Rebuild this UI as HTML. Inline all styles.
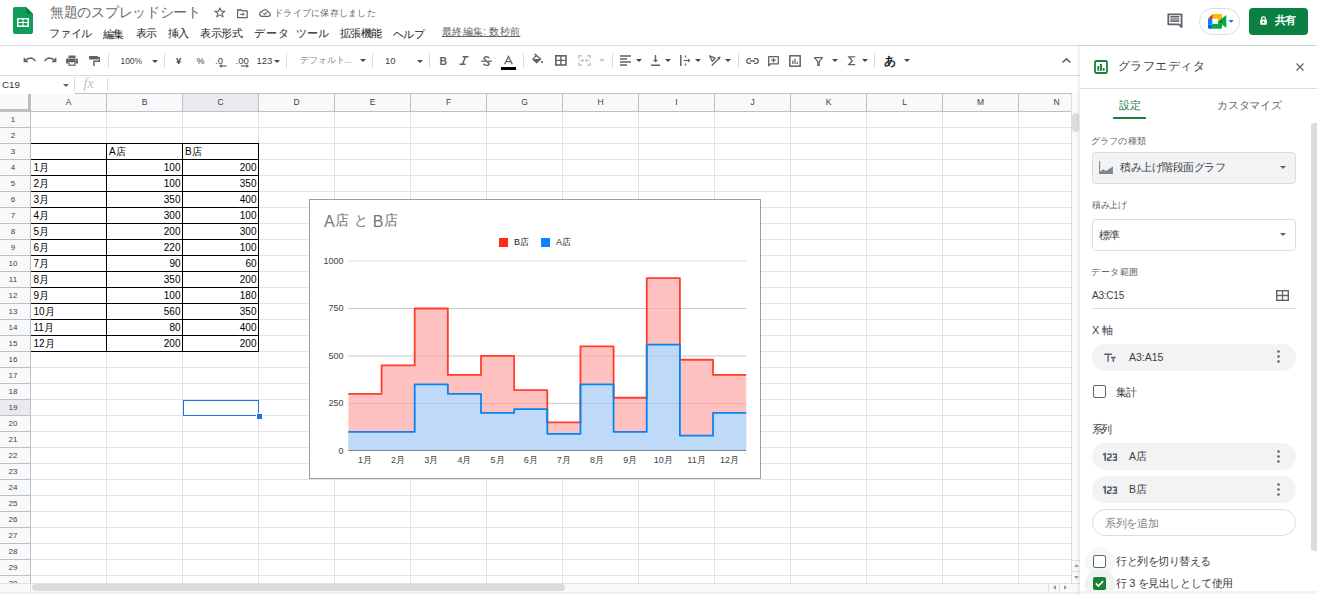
<!DOCTYPE html><html><head><meta charset="utf-8"><style>
*{margin:0;padding:0;box-sizing:border-box}
html,body{width:1317px;height:594px;overflow:hidden;background:#fff;font-family:"Liberation Sans", sans-serif;position:relative}
.a{position:absolute;white-space:nowrap}
svg{position:absolute;overflow:visible}
</style></head><body>

<svg style="left:13px;top:7px" width="20" height="27" viewBox="0 0 20 27">
<path d="M2 0H13L20 7V25Q20 27 18 27H2Q0 27 0 25V2Q0 0 2 0Z" fill="#0f9d58"/>
<path d="M13 0L20 7H15Q13 7 13 5Z" fill="#087f3f"/>
<rect x="4" y="11" width="12" height="9" fill="#fff"/>
<rect x="5.5" y="12.5" width="4" height="2.5" fill="#0f9d58" rx="0.8"/><rect x="10.5" y="12.5" width="4" height="2.5" fill="#0f9d58" rx="0.8"/>
<rect x="5.5" y="16" width="4" height="2.5" fill="#0f9d58" rx="0.8"/><rect x="10.5" y="16" width="4" height="2.5" fill="#0f9d58" rx="0.8"/>
</svg>
<div class="a" style="left:50px;top:6px;font-size:13.5px;line-height:13.5px;color:#6a6a6a;letter-spacing:-0.3px;">無題のスプレッドシート</div>
<svg style="left:214px;top:7px" width="12" height="11" viewBox="0 0 12 11"><path d="M5.9 0.9L7.3 4.2H10.9L8 6.4L9 9.9L5.9 7.9L2.8 9.9L3.8 6.4L0.9 4.2H4.5Z" fill="none" stroke="#5f6368" stroke-width="1.1" stroke-linejoin="round"/></svg>
<svg style="left:237px;top:8.5px" width="11" height="10" viewBox="0 0 11 10"><path d="M0.6 0.8H4.2L5.2 1.8H10.2V8.7H0.6Z" fill="none" stroke="#5f6368" stroke-width="1.2" stroke-linejoin="round"/><path d="M0.6 0.6H4.3L5.3 1.6H0.6Z" fill="#5f6368"/><path d="M3.2 5.3H6.6" stroke="#5f6368" stroke-width="1.1"/><path d="M7.8 5.3L5.6 3.5V7.1Z" fill="#5f6368"/></svg>
<svg style="left:259px;top:9px" width="12" height="8" viewBox="0 0 12 8"><path d="M3 7.3H9.2Q11.3 7.3 11.3 5.3Q11.3 3.5 9.4 3.4Q8.8 0.7 6 0.7Q3.9 0.7 3 2.6Q0.7 3 0.7 5Q0.7 7.3 3 7.3Z" fill="none" stroke="#5f6368" stroke-width="1.15"/><path d="M4.3 4.3L5.6 5.5L7.8 3.3" fill="none" stroke="#5f6368" stroke-width="1.1"/></svg>
<div class="a" style="left:274px;top:9px;font-size:9px;line-height:9px;color:#5f6368;letter-spacing:0.26px;">ドライブに保存しました</div>
<div class="a" style="left:49px;top:28px;font-size:11px;line-height:11px;color:#202124;letter-spacing:-0.23px;">ファイル</div>
<div class="a" style="left:103px;top:29px;font-size:11px;line-height:11px;color:#202124;letter-spacing:-0.8px;">編集</div>
<div class="a" style="left:136px;top:28px;font-size:11px;line-height:11px;color:#202124;letter-spacing:-1.4px;">表示</div>
<div class="a" style="left:168px;top:28px;font-size:11px;line-height:11px;color:#202124;letter-spacing:-0.9px;">挿入</div>
<div class="a" style="left:200px;top:28px;font-size:11px;line-height:11px;color:#202124;letter-spacing:-0.47px;">表示形式</div>
<div class="a" style="left:254px;top:28px;font-size:11px;line-height:11px;color:#202124;letter-spacing:1.0px;">データ</div>
<div class="a" style="left:296px;top:28px;font-size:11px;line-height:11px;color:#202124;letter-spacing:0.05px;">ツール</div>
<div class="a" style="left:340px;top:28px;font-size:11px;line-height:11px;color:#202124;letter-spacing:-0.7px;">拡張機能</div>
<div class="a" style="left:393px;top:29px;font-size:11px;line-height:11px;color:#202124;letter-spacing:-0.6px;">ヘルプ</div>
<div class="a" style="left:442px;top:27px;font-size:10px;line-height:10px;color:#5f6368;letter-spacing:0.31px;text-decoration:underline">最終編集: 数秒前</div>
<svg style="left:1167px;top:13px" width="16" height="15" viewBox="0 0 16 15"><path d="M1.3 1.3H14.6V14L11.8 11.3H1.3Z" fill="none" stroke="#5f6368" stroke-width="1.8" stroke-linejoin="round"/><rect x="3.3" y="3" width="9" height="1.3" fill="#5f6368"/><rect x="3.3" y="4.3" width="9" height="3.6" fill="#9aa0a6"/><rect x="3.3" y="7.6" width="9" height="1.3" fill="#5f6368"/></svg>
<div class="a" style="left:1199px;top:8px;width:41px;height:27px;border:1px solid #dadce0;border-radius:14px"></div>
<svg style="left:1204px;top:11px" width="34" height="21" viewBox="0 0 34 21">
<path d="M8.3 3H16.8Q18 3 18 4.2V7.6L14 10.4V7.8H8.3Z" fill="#ffba00"/>
<path d="M4 7.8L8.5 3.2V7.8Z" fill="#ff1a0a"/>
<path d="M4 7.6H8.3V13.6H4Z" fill="#0084ff"/>
<path d="M4 13.4H8.3V17.8H5.2Q4 17.8 4 16.6Z" fill="#0066da"/>
<path d="M8.2 13H14V10.4L18 13.6V16.6Q18 17.8 16.8 17.8H8.2Z" fill="#00ac47"/>
<path d="M14 10.4L18 7.4V13.6Z" fill="#00832d"/>
<path d="M17.8 7.6L22.3 4V17L17.8 13.6Z" fill="#00ac47"/>
<path d="M24.3 9H29.9L27.1 11.8Z" fill="#1a73e8"/>
</svg>
<div class="a" style="left:1249px;top:8px;width:59px;height:27px;background:#0b8043;border-radius:4px"></div>
<svg style="left:1260px;top:16px" width="7" height="9" viewBox="0 0 7 9"><path d="M1.6 3.8V2.6Q1.6 0.8 3.5 0.8Q5.4 0.8 5.4 2.6V3.8" fill="none" stroke="#fff" stroke-width="1.2"/><rect x="0.2" y="3.6" width="6.6" height="5.2" rx="0.8" fill="#fff"/><circle cx="3.5" cy="6.2" r="0.9" fill="#0b8043"/></svg>
<div class="a" style="left:1275px;top:15px;font-size:11px;line-height:11px;color:#fff;letter-spacing:-1.5px;font-weight:bold">共有</div>
<div class="a" style="left:0px;top:45px;width:1317px;height:1px;background:#dadce0;"></div>
<div class="a" style="left:0px;top:75px;width:1080px;height:1px;background:#dadce0;"></div>
<svg style="left:23px;top:56px" width="13" height="8" viewBox="0 0 13 8"><path d="M3.2 3.6Q6 1.6 9 2.3Q11.2 2.9 12.2 5.2" fill="none" stroke="#5f6368" stroke-width="1.6"/><path d="M0.6 1V6.2H5.8Z" fill="#5f6368"/></svg>
<svg style="left:44px;top:56px" width="13" height="8" viewBox="0 0 13 8"><path d="M9.8 3.6Q7 1.6 4 2.3Q1.8 2.9 0.8 5.2" fill="none" stroke="#5f6368" stroke-width="1.6"/><path d="M12.4 1V6.2H7.2Z" fill="#5f6368"/></svg>
<svg style="left:66px;top:55px" width="12" height="11" viewBox="0 0 12 11"><rect x="2.5" y="0.5" width="7" height="2.5" fill="#5f6368"/><path d="M1.3 3.5H10.7Q12 3.5 12 4.8V8.5H9.5V7H2.5V8.5H0V4.8Q0 3.5 1.3 3.5Z" fill="#5f6368"/><rect x="2.5" y="7.5" width="7" height="3.3" fill="#5f6368"/><rect x="3.7" y="7.7" width="4.6" height="1.9" fill="#fff"/><circle cx="9.8" cy="5.2" r="0.6" fill="#fff"/></svg>
<svg style="left:89px;top:56px" width="11" height="10" viewBox="0 0 11 10"><rect x="0" y="0" width="9" height="3.6" rx="0.5" fill="#5f6368"/><path d="M9 1.8H10.3V5.3H5V10" fill="none" stroke="#5f6368" stroke-width="1.5"/></svg>
<div class="a" style="left:108px;top:53px;width:1px;height:15px;background:#dadce0;"></div>
<div class="a" style="left:120.5px;top:56.8px;font-size:8.4px;line-height:8.4px;color:#3c4043;">100%</div>
<svg style="left:152px;top:60px" width="6" height="3" viewBox="0 0 6 3"><path d="M0 0H6L3 3Z" fill="#444746"/></svg>
<div class="a" style="left:164px;top:53px;width:1px;height:15px;background:#dadce0;"></div>
<div class="a" style="left:176px;top:56px;font-size:9.5px;line-height:9.5px;color:#3c4043;font-weight:bold">¥</div>
<div class="a" style="left:196.5px;top:56.5px;font-size:9px;line-height:9px;color:#3c4043;">%</div>
<div class="a" style="left:215px;top:55.5px;font-size:9.5px;line-height:9.5px;color:#3c4043;">.0</div>
<svg style="left:219px;top:64px" width="8" height="4" viewBox="0 0 8 4"><path d="M1 2H7.5" stroke="#5f6368" stroke-width="1.2"/><path d="M0 2L2.6 0V4Z" fill="#5f6368"/></svg>
<div class="a" style="left:235.5px;top:55.5px;font-size:9.5px;line-height:9.5px;color:#3c4043;">.00</div>
<svg style="left:241px;top:64px" width="8" height="4" viewBox="0 0 8 4"><path d="M0 2H6.5" stroke="#5f6368" stroke-width="1.2"/><path d="M8 2L5.4 0V4Z" fill="#5f6368"/></svg>
<div class="a" style="left:256.5px;top:56px;font-size:9.5px;line-height:9.5px;color:#3c4043;">123</div>
<svg style="left:273.5px;top:59.5px" width="6" height="3" viewBox="0 0 6 3"><path d="M0 0H6L3 3Z" fill="#444746"/></svg>
<div class="a" style="left:286px;top:53px;width:1px;height:15px;background:#dadce0;"></div>
<div class="a" style="left:299.5px;top:55.5px;font-size:8.5px;line-height:8.5px;color:#80868b;">デフォルト...</div>
<svg style="left:360px;top:59px" width="6" height="3" viewBox="0 0 6 3"><path d="M0 0H6L3 3Z" fill="#444746"/></svg>
<div class="a" style="left:372px;top:53px;width:1px;height:15px;background:#dadce0;"></div>
<div class="a" style="left:385px;top:56px;font-size:9.5px;line-height:9.5px;color:#3c4043;">10</div>
<svg style="left:416.5px;top:60px" width="6" height="3" viewBox="0 0 6 3"><path d="M0 0H6L3 3Z" fill="#444746"/></svg>
<div class="a" style="left:429px;top:53px;width:1px;height:15px;background:#dadce0;"></div>
<div class="a" style="left:439.5px;top:55.5px;font-size:10.5px;line-height:10.5px;color:#5f6368;font-weight:bold">B</div>
<svg style="left:459px;top:56px" width="10" height="9" viewBox="0 0 10 9"><path d="M3.5 0.8H9.5M0.5 8.2H6.5M6.5 0.8L3.5 8.2" fill="none" stroke="#5f6368" stroke-width="1.5"/></svg>
<svg style="left:481px;top:56px" width="11" height="10" viewBox="0 0 11 10"><path d="M0 5.2H11" stroke="#5f6368" stroke-width="1.2"/><path d="M8.2 2.2Q7.5 0.8 5.5 0.8Q3 0.8 3 2.6Q3 4 5.5 4.5M5.8 6Q8.2 6.6 8.2 7.8Q8.2 9.4 5.5 9.4Q3.2 9.4 2.7 7.8" fill="none" stroke="#5f6368" stroke-width="1.4"/></svg>
<svg style="left:504px;top:55.5px" width="9" height="9" viewBox="0 0 9 9"><path d="M0.7 8.3L4.5 0.5L8.3 8.3M2 5.6H7" fill="none" stroke="#5f6368" stroke-width="1.3"/></svg>
<div class="a" style="left:501px;top:67px;width:15px;height:3px;background:#000;"></div>
<div class="a" style="left:523px;top:53px;width:1px;height:15px;background:#dadce0;"></div>
<svg style="left:531px;top:53px" width="13" height="11" viewBox="0 0 13 11"><path d="M1.8 6.1L5.4 2.5L9.6 6.1L5.6 9.7Z" fill="none" stroke="#5f6368" stroke-width="1.3" stroke-linejoin="round"/><path d="M1.8 6.1H9.6L5.6 9.7Z" fill="#5f6368"/><path d="M3.6 0.8L5.9 3" stroke="#5f6368" stroke-width="1.2"/><circle cx="11" cy="9.1" r="1.05" fill="#5f6368"/></svg>
<svg style="left:555px;top:55px" width="12" height="11" viewBox="0 0 12 11"><rect x="0.8" y="0.8" width="10.2" height="9.2" fill="none" stroke="#5f6368" stroke-width="1.6"/><path d="M5.9 0.8V10M0.8 5.4H11" stroke="#5f6368" stroke-width="1.4"/></svg>
<svg style="left:578px;top:55px" width="13" height="11" viewBox="0 0 13 11"><path d="M0.8 3.5V0.8H4M9 0.8H12.2V3.5M0.8 7.5V10.2H4M9 10.2H12.2V7.5" fill="none" stroke="#c4c7c5" stroke-width="1.4"/><path d="M1.5 5.5H5.5M11.5 5.5H7.5M4 4L5.5 5.5L4 7M9 4L7.5 5.5L9 7" fill="none" stroke="#c4c7c5" stroke-width="1.1"/></svg>
<svg style="left:599px;top:59px" width="6" height="3" viewBox="0 0 6 3"><path d="M0 0H6L3 3Z" fill="#c4c7c5"/></svg>
<div class="a" style="left:612px;top:53px;width:1px;height:15px;background:#dadce0;"></div>
<svg style="left:620px;top:55px" width="11" height="11" viewBox="0 0 11 11"><path d="M0 1H11M0 4H7M0 7H11M0 10H7" stroke="#5f6368" stroke-width="1.3"/></svg>
<svg style="left:636px;top:59px" width="6" height="3" viewBox="0 0 6 3"><path d="M0 0H6L3 3Z" fill="#444746"/></svg>
<svg style="left:651px;top:55px" width="9" height="11" viewBox="0 0 9 11"><path d="M4.5 0V7M0 10.2H9" stroke="#5f6368" stroke-width="1.4"/><path d="M2 4.8L4.5 7.5L7 4.8Z" fill="#5f6368"/></svg>
<svg style="left:665px;top:59px" width="6" height="3" viewBox="0 0 6 3"><path d="M0 0H6L3 3Z" fill="#444746"/></svg>
<svg style="left:680px;top:55px" width="11" height="11" viewBox="0 0 11 11"><path d="M0.8 0V11" stroke="#5f6368" stroke-width="1.5"/><path d="M5.5 0.5V2.5M5.5 8.5V10.5" stroke="#5f6368" stroke-width="1.3"/><path d="M3.5 5.5H9" stroke="#5f6368" stroke-width="1.2"/><path d="M10.5 5.5L8 3.5V7.5Z" fill="#5f6368"/></svg>
<svg style="left:695px;top:59px" width="6" height="3" viewBox="0 0 6 3"><path d="M0 0H6L3 3Z" fill="#444746"/></svg>
<svg style="left:709px;top:55px" width="12" height="11" viewBox="0 0 12 11"><path d="M0.5 0.8L6 3.2L3.2 6.2Z" fill="none" stroke="#5f6368" stroke-width="1.3" stroke-linejoin="round"/><path d="M2.8 10.5L11 2.2" stroke="#5f6368" stroke-width="1.3"/><path d="M11.5 1.5L8.3 2.3L10.7 4.7Z" fill="#5f6368"/></svg>
<svg style="left:725px;top:59px" width="6" height="3" viewBox="0 0 6 3"><path d="M0 0H6L3 3Z" fill="#444746"/></svg>
<div class="a" style="left:738px;top:53px;width:1px;height:15px;background:#dadce0;"></div>
<svg style="left:746px;top:58px" width="13" height="6" viewBox="0 0 13 6"><path d="M5 0.7H3.2Q0.7 0.7 0.7 3Q0.7 5.3 3.2 5.3H5M8 0.7H9.8Q12.3 0.7 12.3 3Q12.3 5.3 9.8 5.3H8M4 3H9" fill="none" stroke="#5f6368" stroke-width="1.3"/></svg>
<svg style="left:768px;top:56px" width="11" height="11" viewBox="0 0 11 11"><path d="M0.7 0.7H10.3V7.8H2.5L0.7 9.8Z" fill="none" stroke="#5f6368" stroke-width="1.3" stroke-linejoin="round"/><path d="M5.5 2V6.5M3.2 4.2H7.8" stroke="#5f6368" stroke-width="1.2"/></svg>
<svg style="left:789px;top:55px" width="12" height="12" viewBox="0 0 12 12"><rect x="0.8" y="0.8" width="10.4" height="10.4" fill="none" stroke="#5f6368" stroke-width="1.5"/><path d="M3.8 5.5V9M6 3.8V9M8.2 6.8V9" stroke="#5f6368" stroke-width="1.2"/></svg>
<svg style="left:813.5px;top:56.5px" width="9" height="8.5" viewBox="0 0 9 8.5"><path d="M0.5 0.7H8.5L5.2 4.6V8.5H3.8V4.6Z" fill="none" stroke="#5f6368" stroke-width="1.2" stroke-linejoin="round"/></svg>
<svg style="left:832px;top:59px" width="6" height="3" viewBox="0 0 6 3"><path d="M0 0H6L3 3Z" fill="#444746"/></svg>
<svg style="left:848px;top:56px" width="7.5" height="9.5" viewBox="0 0 7.5 9.5"><path d="M7.2 0.8H0.8L4.3 4.75L0.8 8.7H7.2" fill="none" stroke="#5f6368" stroke-width="1.3"/></svg>
<svg style="left:862px;top:59px" width="6" height="3" viewBox="0 0 6 3"><path d="M0 0H6L3 3Z" fill="#444746"/></svg>
<div class="a" style="left:874px;top:53px;width:1px;height:15px;background:#dadce0;"></div>
<div class="a" style="left:883.5px;top:54.5px;font-size:12px;line-height:12px;color:#202124;font-weight:bold">あ</div>
<svg style="left:904px;top:59px" width="6" height="3" viewBox="0 0 6 3"><path d="M0 0H6L3 3Z" fill="#444746"/></svg>
<svg style="left:1062px;top:58px" width="9" height="5" viewBox="0 0 9 5"><path d="M0.5 4.5L4.5 0.8L8.5 4.5" fill="none" stroke="#5f6368" stroke-width="1.6"/></svg>
<div class="a" style="left:2px;top:80px;font-size:9.8px;line-height:9.8px;color:#333;">C19</div>
<svg style="left:63px;top:84px" width="6" height="3" viewBox="0 0 6 3"><path d="M0 0H6L3 3Z" fill="#5f6368"/></svg>
<div class="a" style="left:74px;top:77px;width:1px;height:16px;background:#dadce0;"></div>
<div class="a" style="left:83.5px;top:77px;font-size:14px;line-height:14px;color:#bdc1c6;font-family:'Liberation Serif',serif;font-style:italic">fx</div>
<div class="a" style="left:107px;top:78px;width:1px;height:13px;background:#dadce0;"></div>
<div class="a" style="left:0px;top:94px;width:1071px;height:17px;background:#f8f9fa;"></div>
<div class="a" style="left:75px;top:93px;width:999px;height:1px;background:#c0c0c0;"></div>
<div class="a" style="left:183px;top:94px;width:75px;height:17px;background:#e8eaed;"></div>
<div class="a" style="left:0px;top:111px;width:30px;height:472px;background:#f8f9fa;"></div>
<div class="a" style="left:0px;top:400px;width:30px;height:15px;background:#e8eaed;"></div>
<div class="a" style="left:0px;top:111px;width:30px;height:1px;background:#c0c0c0;"></div>
<div class="a" style="left:31px;top:111px;width:1040px;height:1px;background:#c0c0c0;"></div>
<div class="a" style="left:0px;top:127px;width:30px;height:1px;background:#c0c0c0;"></div>
<div class="a" style="left:31px;top:127px;width:1040px;height:1px;background:#e2e3e3;"></div>
<div class="a" style="left:0px;top:143px;width:30px;height:1px;background:#c0c0c0;"></div>
<div class="a" style="left:31px;top:143px;width:1040px;height:1px;background:#e2e3e3;"></div>
<div class="a" style="left:0px;top:159px;width:30px;height:1px;background:#c0c0c0;"></div>
<div class="a" style="left:31px;top:159px;width:1040px;height:1px;background:#e2e3e3;"></div>
<div class="a" style="left:0px;top:175px;width:30px;height:1px;background:#c0c0c0;"></div>
<div class="a" style="left:31px;top:175px;width:1040px;height:1px;background:#e2e3e3;"></div>
<div class="a" style="left:0px;top:191px;width:30px;height:1px;background:#c0c0c0;"></div>
<div class="a" style="left:31px;top:191px;width:1040px;height:1px;background:#e2e3e3;"></div>
<div class="a" style="left:0px;top:207px;width:30px;height:1px;background:#c0c0c0;"></div>
<div class="a" style="left:31px;top:207px;width:1040px;height:1px;background:#e2e3e3;"></div>
<div class="a" style="left:0px;top:223px;width:30px;height:1px;background:#c0c0c0;"></div>
<div class="a" style="left:31px;top:223px;width:1040px;height:1px;background:#e2e3e3;"></div>
<div class="a" style="left:0px;top:239px;width:30px;height:1px;background:#c0c0c0;"></div>
<div class="a" style="left:31px;top:239px;width:1040px;height:1px;background:#e2e3e3;"></div>
<div class="a" style="left:0px;top:255px;width:30px;height:1px;background:#c0c0c0;"></div>
<div class="a" style="left:31px;top:255px;width:1040px;height:1px;background:#e2e3e3;"></div>
<div class="a" style="left:0px;top:271px;width:30px;height:1px;background:#c0c0c0;"></div>
<div class="a" style="left:31px;top:271px;width:1040px;height:1px;background:#e2e3e3;"></div>
<div class="a" style="left:0px;top:287px;width:30px;height:1px;background:#c0c0c0;"></div>
<div class="a" style="left:31px;top:287px;width:1040px;height:1px;background:#e2e3e3;"></div>
<div class="a" style="left:0px;top:303px;width:30px;height:1px;background:#c0c0c0;"></div>
<div class="a" style="left:31px;top:303px;width:1040px;height:1px;background:#e2e3e3;"></div>
<div class="a" style="left:0px;top:319px;width:30px;height:1px;background:#c0c0c0;"></div>
<div class="a" style="left:31px;top:319px;width:1040px;height:1px;background:#e2e3e3;"></div>
<div class="a" style="left:0px;top:335px;width:30px;height:1px;background:#c0c0c0;"></div>
<div class="a" style="left:31px;top:335px;width:1040px;height:1px;background:#e2e3e3;"></div>
<div class="a" style="left:0px;top:351px;width:30px;height:1px;background:#c0c0c0;"></div>
<div class="a" style="left:31px;top:351px;width:1040px;height:1px;background:#e2e3e3;"></div>
<div class="a" style="left:0px;top:367px;width:30px;height:1px;background:#c0c0c0;"></div>
<div class="a" style="left:31px;top:367px;width:1040px;height:1px;background:#e2e3e3;"></div>
<div class="a" style="left:0px;top:383px;width:30px;height:1px;background:#c0c0c0;"></div>
<div class="a" style="left:31px;top:383px;width:1040px;height:1px;background:#e2e3e3;"></div>
<div class="a" style="left:0px;top:399px;width:30px;height:1px;background:#c0c0c0;"></div>
<div class="a" style="left:31px;top:399px;width:1040px;height:1px;background:#e2e3e3;"></div>
<div class="a" style="left:0px;top:415px;width:30px;height:1px;background:#c0c0c0;"></div>
<div class="a" style="left:31px;top:415px;width:1040px;height:1px;background:#e2e3e3;"></div>
<div class="a" style="left:0px;top:431px;width:30px;height:1px;background:#c0c0c0;"></div>
<div class="a" style="left:31px;top:431px;width:1040px;height:1px;background:#e2e3e3;"></div>
<div class="a" style="left:0px;top:447px;width:30px;height:1px;background:#c0c0c0;"></div>
<div class="a" style="left:31px;top:447px;width:1040px;height:1px;background:#e2e3e3;"></div>
<div class="a" style="left:0px;top:463px;width:30px;height:1px;background:#c0c0c0;"></div>
<div class="a" style="left:31px;top:463px;width:1040px;height:1px;background:#e2e3e3;"></div>
<div class="a" style="left:0px;top:479px;width:30px;height:1px;background:#c0c0c0;"></div>
<div class="a" style="left:31px;top:479px;width:1040px;height:1px;background:#e2e3e3;"></div>
<div class="a" style="left:0px;top:495px;width:30px;height:1px;background:#c0c0c0;"></div>
<div class="a" style="left:31px;top:495px;width:1040px;height:1px;background:#e2e3e3;"></div>
<div class="a" style="left:0px;top:511px;width:30px;height:1px;background:#c0c0c0;"></div>
<div class="a" style="left:31px;top:511px;width:1040px;height:1px;background:#e2e3e3;"></div>
<div class="a" style="left:0px;top:527px;width:30px;height:1px;background:#c0c0c0;"></div>
<div class="a" style="left:31px;top:527px;width:1040px;height:1px;background:#e2e3e3;"></div>
<div class="a" style="left:0px;top:543px;width:30px;height:1px;background:#c0c0c0;"></div>
<div class="a" style="left:31px;top:543px;width:1040px;height:1px;background:#e2e3e3;"></div>
<div class="a" style="left:0px;top:559px;width:30px;height:1px;background:#c0c0c0;"></div>
<div class="a" style="left:31px;top:559px;width:1040px;height:1px;background:#e2e3e3;"></div>
<div class="a" style="left:0px;top:575px;width:30px;height:1px;background:#c0c0c0;"></div>
<div class="a" style="left:31px;top:575px;width:1040px;height:1px;background:#e2e3e3;"></div>
<div class="a" style="left:106px;top:94px;width:1px;height:17px;background:#c0c0c0;"></div>
<div class="a" style="left:106px;top:112px;width:1px;height:471px;background:#e2e3e3;"></div>
<div class="a" style="left:182px;top:94px;width:1px;height:17px;background:#c0c0c0;"></div>
<div class="a" style="left:182px;top:112px;width:1px;height:471px;background:#e2e3e3;"></div>
<div class="a" style="left:258px;top:94px;width:1px;height:17px;background:#c0c0c0;"></div>
<div class="a" style="left:258px;top:112px;width:1px;height:471px;background:#e2e3e3;"></div>
<div class="a" style="left:334px;top:94px;width:1px;height:17px;background:#c0c0c0;"></div>
<div class="a" style="left:334px;top:112px;width:1px;height:471px;background:#e2e3e3;"></div>
<div class="a" style="left:410px;top:94px;width:1px;height:17px;background:#c0c0c0;"></div>
<div class="a" style="left:410px;top:112px;width:1px;height:471px;background:#e2e3e3;"></div>
<div class="a" style="left:486px;top:94px;width:1px;height:17px;background:#c0c0c0;"></div>
<div class="a" style="left:486px;top:112px;width:1px;height:471px;background:#e2e3e3;"></div>
<div class="a" style="left:562px;top:94px;width:1px;height:17px;background:#c0c0c0;"></div>
<div class="a" style="left:562px;top:112px;width:1px;height:471px;background:#e2e3e3;"></div>
<div class="a" style="left:638px;top:94px;width:1px;height:17px;background:#c0c0c0;"></div>
<div class="a" style="left:638px;top:112px;width:1px;height:471px;background:#e2e3e3;"></div>
<div class="a" style="left:714px;top:94px;width:1px;height:17px;background:#c0c0c0;"></div>
<div class="a" style="left:714px;top:112px;width:1px;height:471px;background:#e2e3e3;"></div>
<div class="a" style="left:790px;top:94px;width:1px;height:17px;background:#c0c0c0;"></div>
<div class="a" style="left:790px;top:112px;width:1px;height:471px;background:#e2e3e3;"></div>
<div class="a" style="left:866px;top:94px;width:1px;height:17px;background:#c0c0c0;"></div>
<div class="a" style="left:866px;top:112px;width:1px;height:471px;background:#e2e3e3;"></div>
<div class="a" style="left:942px;top:94px;width:1px;height:17px;background:#c0c0c0;"></div>
<div class="a" style="left:942px;top:112px;width:1px;height:471px;background:#e2e3e3;"></div>
<div class="a" style="left:1018px;top:94px;width:1px;height:17px;background:#c0c0c0;"></div>
<div class="a" style="left:1018px;top:112px;width:1px;height:471px;background:#e2e3e3;"></div>
<div class="a" style="left:30px;top:111px;width:1px;height:472px;background:#c0c0c0;"></div>
<div class="a" style="left:1071px;top:94px;width:1px;height:489px;background:#dcdcdc;"></div>
<div class="a" style="left:28px;top:94px;width:3px;height:17px;background:#bdbdbd;"></div>
<div class="a" style="left:0px;top:109px;width:31px;height:2px;background:#bdbdbd;"></div>
<div class="a" style="left:48.5px;top:97px;width:40px;text-align:center;font-size:8.5px;line-height:10px;color:#3c4043">A</div>
<div class="a" style="left:124.5px;top:97px;width:40px;text-align:center;font-size:8.5px;line-height:10px;color:#3c4043">B</div>
<div class="a" style="left:200.5px;top:97px;width:40px;text-align:center;font-size:8.5px;line-height:10px;color:#3c4043">C</div>
<div class="a" style="left:276.5px;top:97px;width:40px;text-align:center;font-size:8.5px;line-height:10px;color:#3c4043">D</div>
<div class="a" style="left:352.5px;top:97px;width:40px;text-align:center;font-size:8.5px;line-height:10px;color:#3c4043">E</div>
<div class="a" style="left:428.5px;top:97px;width:40px;text-align:center;font-size:8.5px;line-height:10px;color:#3c4043">F</div>
<div class="a" style="left:504.5px;top:97px;width:40px;text-align:center;font-size:8.5px;line-height:10px;color:#3c4043">G</div>
<div class="a" style="left:580.5px;top:97px;width:40px;text-align:center;font-size:8.5px;line-height:10px;color:#3c4043">H</div>
<div class="a" style="left:656.5px;top:97px;width:40px;text-align:center;font-size:8.5px;line-height:10px;color:#3c4043">I</div>
<div class="a" style="left:732.5px;top:97px;width:40px;text-align:center;font-size:8.5px;line-height:10px;color:#3c4043">J</div>
<div class="a" style="left:808.5px;top:97px;width:40px;text-align:center;font-size:8.5px;line-height:10px;color:#3c4043">K</div>
<div class="a" style="left:884.5px;top:97px;width:40px;text-align:center;font-size:8.5px;line-height:10px;color:#3c4043">L</div>
<div class="a" style="left:960.5px;top:97px;width:40px;text-align:center;font-size:8.5px;line-height:10px;color:#3c4043">M</div>
<div class="a" style="left:1036.5px;top:97px;width:40px;text-align:center;font-size:8.5px;line-height:10px;color:#3c4043">N</div>
<div class="a" style="left:0;top:115px;width:26px;text-align:center;font-size:8px;line-height:9px;color:#3c4043">1</div>
<div class="a" style="left:0;top:131px;width:26px;text-align:center;font-size:8px;line-height:9px;color:#3c4043">2</div>
<div class="a" style="left:0;top:147px;width:26px;text-align:center;font-size:8px;line-height:9px;color:#3c4043">3</div>
<div class="a" style="left:0;top:163px;width:26px;text-align:center;font-size:8px;line-height:9px;color:#3c4043">4</div>
<div class="a" style="left:0;top:179px;width:26px;text-align:center;font-size:8px;line-height:9px;color:#3c4043">5</div>
<div class="a" style="left:0;top:195px;width:26px;text-align:center;font-size:8px;line-height:9px;color:#3c4043">6</div>
<div class="a" style="left:0;top:211px;width:26px;text-align:center;font-size:8px;line-height:9px;color:#3c4043">7</div>
<div class="a" style="left:0;top:227px;width:26px;text-align:center;font-size:8px;line-height:9px;color:#3c4043">8</div>
<div class="a" style="left:0;top:243px;width:26px;text-align:center;font-size:8px;line-height:9px;color:#3c4043">9</div>
<div class="a" style="left:0;top:259px;width:26px;text-align:center;font-size:8px;line-height:9px;color:#3c4043">10</div>
<div class="a" style="left:0;top:275px;width:26px;text-align:center;font-size:8px;line-height:9px;color:#3c4043">11</div>
<div class="a" style="left:0;top:291px;width:26px;text-align:center;font-size:8px;line-height:9px;color:#3c4043">12</div>
<div class="a" style="left:0;top:307px;width:26px;text-align:center;font-size:8px;line-height:9px;color:#3c4043">13</div>
<div class="a" style="left:0;top:323px;width:26px;text-align:center;font-size:8px;line-height:9px;color:#3c4043">14</div>
<div class="a" style="left:0;top:339px;width:26px;text-align:center;font-size:8px;line-height:9px;color:#3c4043">15</div>
<div class="a" style="left:0;top:355px;width:26px;text-align:center;font-size:8px;line-height:9px;color:#3c4043">16</div>
<div class="a" style="left:0;top:371px;width:26px;text-align:center;font-size:8px;line-height:9px;color:#3c4043">17</div>
<div class="a" style="left:0;top:387px;width:26px;text-align:center;font-size:8px;line-height:9px;color:#3c4043">18</div>
<div class="a" style="left:0;top:403px;width:26px;text-align:center;font-size:8px;line-height:9px;color:#3c4043">19</div>
<div class="a" style="left:0;top:419px;width:26px;text-align:center;font-size:8px;line-height:9px;color:#3c4043">20</div>
<div class="a" style="left:0;top:435px;width:26px;text-align:center;font-size:8px;line-height:9px;color:#3c4043">21</div>
<div class="a" style="left:0;top:451px;width:26px;text-align:center;font-size:8px;line-height:9px;color:#3c4043">22</div>
<div class="a" style="left:0;top:467px;width:26px;text-align:center;font-size:8px;line-height:9px;color:#3c4043">23</div>
<div class="a" style="left:0;top:483px;width:26px;text-align:center;font-size:8px;line-height:9px;color:#3c4043">24</div>
<div class="a" style="left:0;top:499px;width:26px;text-align:center;font-size:8px;line-height:9px;color:#3c4043">25</div>
<div class="a" style="left:0;top:515px;width:26px;text-align:center;font-size:8px;line-height:9px;color:#3c4043">26</div>
<div class="a" style="left:0;top:531px;width:26px;text-align:center;font-size:8px;line-height:9px;color:#3c4043">27</div>
<div class="a" style="left:0;top:547px;width:26px;text-align:center;font-size:8px;line-height:9px;color:#3c4043">28</div>
<div class="a" style="left:0;top:563px;width:26px;text-align:center;font-size:8px;line-height:9px;color:#3c4043">29</div>
<div class="a" style="left:0;top:579px;width:26px;text-align:center;font-size:8px;line-height:9px;color:#3c4043">30</div>
<div class="a" style="left:0px;top:583px;width:1080px;height:9px;background:#f8f9fa;"></div>
<div class="a" style="left:0px;top:583px;width:1080px;height:1px;background:#e0e0e0;"></div>
<div class="a" style="left:30px;top:583px;width:1px;height:9px;background:#e0e0e0;"></div>
<div class="a" style="left:32px;top:584px;width:533px;height:7px;background:#dadce0;border-radius:4px"></div>
<div class="a" style="left:0px;top:592px;width:1080px;height:2px;background:#eeeeee;"></div>
<div class="a" style="left:1072px;top:93px;width:8px;height:490px;background:#fafafa;"></div>
<div class="a" style="left:1072px;top:113px;width:7px;height:19px;background:#dadce0;border-radius:4px"></div>
<div class="a" style="left:1072px;top:560px;width:8px;height:1px;background:#e0e0e0;"></div>
<div class="a" style="left:1072px;top:571px;width:8px;height:1px;background:#e0e0e0;"></div>
<svg style="left:1073.5px;top:564px" width="5" height="3" viewBox="0 0 5 3"><path d="M0 3H5L2.5 0Z" fill="#9e9e9e"/></svg>
<svg style="left:1073.5px;top:576px" width="5" height="3" viewBox="0 0 5 3"><path d="M0 0H5L2.5 3Z" fill="#9e9e9e"/></svg>
<div class="a" style="left:1048px;top:583px;width:1px;height:9px;background:#e0e0e0;"></div>
<div class="a" style="left:1059px;top:583px;width:1px;height:9px;background:#e0e0e0;"></div>
<svg style="left:1053px;top:585px" width="3" height="5" viewBox="0 0 3 5"><path d="M3 0V5L0 2.5Z" fill="#9e9e9e"/></svg>
<svg style="left:1064px;top:585px" width="3" height="5" viewBox="0 0 3 5"><path d="M0 0V5L3 2.5Z" fill="#9e9e9e"/></svg>
<div class="a" style="left:31px;top:143px;width:228px;height:1px;background:#000;"></div>
<div class="a" style="left:31px;top:159px;width:228px;height:1px;background:#000;"></div>
<div class="a" style="left:31px;top:175px;width:228px;height:1px;background:#000;"></div>
<div class="a" style="left:31px;top:191px;width:228px;height:1px;background:#000;"></div>
<div class="a" style="left:31px;top:207px;width:228px;height:1px;background:#000;"></div>
<div class="a" style="left:31px;top:223px;width:228px;height:1px;background:#000;"></div>
<div class="a" style="left:31px;top:239px;width:228px;height:1px;background:#000;"></div>
<div class="a" style="left:31px;top:255px;width:228px;height:1px;background:#000;"></div>
<div class="a" style="left:31px;top:271px;width:228px;height:1px;background:#000;"></div>
<div class="a" style="left:31px;top:287px;width:228px;height:1px;background:#000;"></div>
<div class="a" style="left:31px;top:303px;width:228px;height:1px;background:#000;"></div>
<div class="a" style="left:31px;top:319px;width:228px;height:1px;background:#000;"></div>
<div class="a" style="left:31px;top:335px;width:228px;height:1px;background:#000;"></div>
<div class="a" style="left:31px;top:351px;width:228px;height:1px;background:#000;"></div>
<div class="a" style="left:106px;top:143px;width:1px;height:209px;background:#000;"></div>
<div class="a" style="left:182px;top:143px;width:1px;height:209px;background:#000;"></div>
<div class="a" style="left:258px;top:143px;width:1px;height:209px;background:#000;"></div>
<div class="a" style="left:109px;top:146.5px;font-size:10px;line-height:10px;color:#000">A店</div>
<div class="a" style="left:185px;top:146.5px;font-size:10px;line-height:10px;color:#000">B店</div>
<div class="a" style="left:33.5px;top:162.5px;font-size:10px;line-height:10px;color:#000">1月</div>
<div class="a" style="left:107px;top:162.5px;width:73.5px;text-align:right;font-size:10px;line-height:10px;color:#000">100</div>
<div class="a" style="left:183px;top:162.5px;width:73.5px;text-align:right;font-size:10px;line-height:10px;color:#000">200</div>
<div class="a" style="left:33.5px;top:178.5px;font-size:10px;line-height:10px;color:#000">2月</div>
<div class="a" style="left:107px;top:178.5px;width:73.5px;text-align:right;font-size:10px;line-height:10px;color:#000">100</div>
<div class="a" style="left:183px;top:178.5px;width:73.5px;text-align:right;font-size:10px;line-height:10px;color:#000">350</div>
<div class="a" style="left:33.5px;top:194.5px;font-size:10px;line-height:10px;color:#000">3月</div>
<div class="a" style="left:107px;top:194.5px;width:73.5px;text-align:right;font-size:10px;line-height:10px;color:#000">350</div>
<div class="a" style="left:183px;top:194.5px;width:73.5px;text-align:right;font-size:10px;line-height:10px;color:#000">400</div>
<div class="a" style="left:33.5px;top:210.5px;font-size:10px;line-height:10px;color:#000">4月</div>
<div class="a" style="left:107px;top:210.5px;width:73.5px;text-align:right;font-size:10px;line-height:10px;color:#000">300</div>
<div class="a" style="left:183px;top:210.5px;width:73.5px;text-align:right;font-size:10px;line-height:10px;color:#000">100</div>
<div class="a" style="left:33.5px;top:226.5px;font-size:10px;line-height:10px;color:#000">5月</div>
<div class="a" style="left:107px;top:226.5px;width:73.5px;text-align:right;font-size:10px;line-height:10px;color:#000">200</div>
<div class="a" style="left:183px;top:226.5px;width:73.5px;text-align:right;font-size:10px;line-height:10px;color:#000">300</div>
<div class="a" style="left:33.5px;top:242.5px;font-size:10px;line-height:10px;color:#000">6月</div>
<div class="a" style="left:107px;top:242.5px;width:73.5px;text-align:right;font-size:10px;line-height:10px;color:#000">220</div>
<div class="a" style="left:183px;top:242.5px;width:73.5px;text-align:right;font-size:10px;line-height:10px;color:#000">100</div>
<div class="a" style="left:33.5px;top:258.5px;font-size:10px;line-height:10px;color:#000">7月</div>
<div class="a" style="left:107px;top:258.5px;width:73.5px;text-align:right;font-size:10px;line-height:10px;color:#000">90</div>
<div class="a" style="left:183px;top:258.5px;width:73.5px;text-align:right;font-size:10px;line-height:10px;color:#000">60</div>
<div class="a" style="left:33.5px;top:274.5px;font-size:10px;line-height:10px;color:#000">8月</div>
<div class="a" style="left:107px;top:274.5px;width:73.5px;text-align:right;font-size:10px;line-height:10px;color:#000">350</div>
<div class="a" style="left:183px;top:274.5px;width:73.5px;text-align:right;font-size:10px;line-height:10px;color:#000">200</div>
<div class="a" style="left:33.5px;top:290.5px;font-size:10px;line-height:10px;color:#000">9月</div>
<div class="a" style="left:107px;top:290.5px;width:73.5px;text-align:right;font-size:10px;line-height:10px;color:#000">100</div>
<div class="a" style="left:183px;top:290.5px;width:73.5px;text-align:right;font-size:10px;line-height:10px;color:#000">180</div>
<div class="a" style="left:33.5px;top:306.5px;font-size:10px;line-height:10px;color:#000">10月</div>
<div class="a" style="left:107px;top:306.5px;width:73.5px;text-align:right;font-size:10px;line-height:10px;color:#000">560</div>
<div class="a" style="left:183px;top:306.5px;width:73.5px;text-align:right;font-size:10px;line-height:10px;color:#000">350</div>
<div class="a" style="left:33.5px;top:322.5px;font-size:10px;line-height:10px;color:#000">11月</div>
<div class="a" style="left:107px;top:322.5px;width:73.5px;text-align:right;font-size:10px;line-height:10px;color:#000">80</div>
<div class="a" style="left:183px;top:322.5px;width:73.5px;text-align:right;font-size:10px;line-height:10px;color:#000">400</div>
<div class="a" style="left:33.5px;top:338.5px;font-size:10px;line-height:10px;color:#000">12月</div>
<div class="a" style="left:107px;top:338.5px;width:73.5px;text-align:right;font-size:10px;line-height:10px;color:#000">200</div>
<div class="a" style="left:183px;top:338.5px;width:73.5px;text-align:right;font-size:10px;line-height:10px;color:#000">200</div>
<div class="a" style="left:183px;top:399.5px;width:76px;height:16.5px;border:1.5px solid #1a73e8"></div>
<div class="a" style="left:256px;top:413px;width:6px;height:6px;background:#fff;"></div>
<div class="a" style="left:257px;top:414px;width:4.5px;height:4.5px;background:#1a73e8;"></div>
<div class="a" style="left:309px;top:199px;width:452px;height:280px;background:#fff;border:1px solid #9e9e9e"></div>
<div class="a" style="left:324px;top:212px;font-size:16px;line-height:16px;color:#757575;letter-spacing:0.25px;">A<span style="font-size:14px;vertical-align:1.5px">店</span> <span style="font-size:14px;vertical-align:1.5px">と</span> B<span style="font-size:14px;vertical-align:1.5px">店</span></div>
<div class="a" style="left:499px;top:238px;width:9px;height:9px;background:#ff2a14"></div>
<div class="a" style="left:514px;top:236.5px;font-size:9px;line-height:10px;color:#222">B店</div>
<div class="a" style="left:541px;top:238px;width:9px;height:9px;background:#0a84ff"></div>
<div class="a" style="left:556px;top:236.5px;font-size:9px;line-height:10px;color:#222">A店</div>
<div class="a" style="left:300px;top:445.9px;width:43.6px;text-align:right;font-size:9px;line-height:10px;color:#444">0</div>
<div class="a" style="left:300px;top:398.42499999999995px;width:43.6px;text-align:right;font-size:9px;line-height:10px;color:#444">250</div>
<div class="a" style="left:300px;top:350.95px;width:43.6px;text-align:right;font-size:9px;line-height:10px;color:#444">500</div>
<div class="a" style="left:300px;top:303.475px;width:43.6px;text-align:right;font-size:9px;line-height:10px;color:#444">750</div>
<div class="a" style="left:300px;top:256.0px;width:43.6px;text-align:right;font-size:9px;line-height:10px;color:#444">1000</div>
<div class="a" style="left:344.97499999999997px;top:455px;width:40px;text-align:center;font-size:9px;line-height:10px;color:#444">1月</div>
<div class="a" style="left:378.125px;top:455px;width:40px;text-align:center;font-size:9px;line-height:10px;color:#444">2月</div>
<div class="a" style="left:411.275px;top:455px;width:40px;text-align:center;font-size:9px;line-height:10px;color:#444">3月</div>
<div class="a" style="left:444.425px;top:455px;width:40px;text-align:center;font-size:9px;line-height:10px;color:#444">4月</div>
<div class="a" style="left:477.575px;top:455px;width:40px;text-align:center;font-size:9px;line-height:10px;color:#444">5月</div>
<div class="a" style="left:510.725px;top:455px;width:40px;text-align:center;font-size:9px;line-height:10px;color:#444">6月</div>
<div class="a" style="left:543.875px;top:455px;width:40px;text-align:center;font-size:9px;line-height:10px;color:#444">7月</div>
<div class="a" style="left:577.0250000000001px;top:455px;width:40px;text-align:center;font-size:9px;line-height:10px;color:#444">8月</div>
<div class="a" style="left:610.175px;top:455px;width:40px;text-align:center;font-size:9px;line-height:10px;color:#444">9月</div>
<div class="a" style="left:643.325px;top:455px;width:40px;text-align:center;font-size:9px;line-height:10px;color:#444">10月</div>
<div class="a" style="left:676.475px;top:455px;width:40px;text-align:center;font-size:9px;line-height:10px;color:#444">11月</div>
<div class="a" style="left:709.625px;top:455px;width:40px;text-align:center;font-size:9px;line-height:10px;color:#444">12月</div>
<svg style="left:0;top:0" width="1317" height="594" viewBox="0 0 1317 594"><path d="M348.4 403.42H746.2" stroke="#dcdcdc" stroke-width="1"/><path d="M348.4 355.95H746.2" stroke="#dcdcdc" stroke-width="1"/><path d="M348.4 308.48H746.2" stroke="#dcdcdc" stroke-width="1"/><path d="M348.4 261.00H746.2" stroke="#dcdcdc" stroke-width="1"/><path d="M348.40 393.93H381.55V365.44H414.70V308.48H447.85V374.94H481.00V355.95H514.15V390.13H547.30V422.41H580.45V346.45H613.60V397.73H646.75V278.09H679.90V359.75H713.05V374.94H746.20V450.9H348.4Z" fill="#ffc2c0"/><path d="M348.40 431.91H381.55V431.91H414.70V384.44H447.85V393.93H481.00V412.92H514.15V409.12H547.30V433.81H580.45V384.44H613.60V431.91H646.75V344.56H679.90V435.71H713.05V412.92H746.20V450.9H348.4Z" fill="#bedaf8"/><path d="M348.4 403.42H746.2" stroke="rgba(60,0,0,0.09)" stroke-width="1"/><path d="M348.4 355.95H746.2" stroke="rgba(60,0,0,0.09)" stroke-width="1"/><path d="M348.4 308.48H746.2" stroke="rgba(60,0,0,0.09)" stroke-width="1"/><path d="M348.40 393.93H381.55V365.44H414.70V308.48H447.85V374.94H481.00V355.95H514.15V390.13H547.30V422.41H580.45V346.45H613.60V397.73H646.75V278.09H679.90V359.75H713.05V374.94H746.20" fill="none" stroke="#ff3d2c" stroke-width="1.8" stroke-linejoin="round"/><path d="M348.40 431.91H381.55V431.91H414.70V384.44H447.85V393.93H481.00V412.92H514.15V409.12H547.30V433.81H580.45V384.44H613.60V431.91H646.75V344.56H679.90V435.71H713.05V412.92H746.20" fill="none" stroke="#0585f2" stroke-width="1.8" stroke-linejoin="round"/><path d="M348.4 450.5H746.2" stroke="rgba(50,50,50,0.5)" stroke-width="1.1"/></svg>
<div class="a" style="left:1080px;top:46px;width:237px;height:548px;background:#fff;box-shadow:-1px 0 3px rgba(60,64,67,0.15)"></div>
<svg style="left:1094px;top:60px" width="14" height="14" viewBox="0 0 14 14"><rect x="1" y="1" width="12" height="12" rx="1.2" fill="none" stroke="#188038" stroke-width="1.8"/><path d="M4.3 6V10.8M7 4V10.8M9.7 8V10.8" stroke="#188038" stroke-width="1.9"/></svg>
<div class="a" style="left:1118px;top:60px;font-size:12px;line-height:12px;color:#3c4043;letter-spacing:0.45px;">グラフエディタ</div>
<svg style="left:1296px;top:63px" width="8" height="8" viewBox="0 0 8 8"><path d="M0.5 0.5L7.5 7.5M7.5 0.5L0.5 7.5" stroke="#5f6368" stroke-width="1.2"/></svg>
<div class="a" style="left:1080px;top:88px;width:237px;height:1px;background:#dadce0;"></div>
<div class="a" style="left:1119px;top:100px;font-size:11px;line-height:11px;color:#188038;letter-spacing:0.3px;">設定</div>
<div class="a" style="left:1113px;top:117px;width:33px;height:2px;background:#188038;border-radius:1px 1px 0 0"></div>
<div class="a" style="left:1217px;top:100px;font-size:11px;line-height:11px;color:#5f6368;letter-spacing:-0.24px;">カスタマイズ</div>
<div class="a" style="left:1311px;top:123px;width:6px;height:428px;background:#dadce0;border-radius:3px 0 0 3px"></div>
<div class="a" style="left:1091px;top:137px;font-size:9px;line-height:9px;color:#5f6368;letter-spacing:0.14px;">グラフの種類</div>
<div class="a" style="left:1092px;top:152px;width:204px;height:32px;background:#f1f3f4;border:1px solid #dadce0;border-radius:4px"></div>
<svg style="left:1099px;top:161px" width="14" height="13" viewBox="0 0 14 13"><path d="M0.6 0V12.4H14" fill="none" stroke="#80868b" stroke-width="1.1"/><path d="M1 12.5V11L4 8.3L7 10.1L13.9 5.6V12.5Z" fill="#80868b"/></svg>
<div class="a" style="left:1120px;top:162px;font-size:11px;line-height:11px;color:#3c4043;letter-spacing:-0.5px;">積み上げ階段面グラフ</div>
<svg style="left:1280px;top:166px" width="6" height="3" viewBox="0 0 6 3"><path d="M0 0H6L3 3Z" fill="#5f6368"/></svg>
<div class="a" style="left:1092px;top:201px;font-size:9px;line-height:9px;color:#5f6368;letter-spacing:-0.33px;">積み上げ</div>
<div class="a" style="left:1092px;top:219px;width:204px;height:32px;background:#fff;border:1px solid #dadce0;border-radius:4px"></div>
<div class="a" style="left:1099px;top:230px;font-size:11px;line-height:11px;color:#3c4043;letter-spacing:-1.3px;">標準</div>
<svg style="left:1280px;top:233px" width="6" height="3" viewBox="0 0 6 3"><path d="M0 0H6L3 3Z" fill="#5f6368"/></svg>
<div class="a" style="left:1091px;top:268px;font-size:9px;line-height:9px;color:#5f6368;letter-spacing:0.5px;">データ範囲</div>
<div class="a" style="left:1092px;top:291px;font-size:10px;line-height:10px;color:#3c4043;letter-spacing:-0.22px;">A3:C15</div>
<svg style="left:1276px;top:290px" width="13" height="11" viewBox="0 0 13 11"><rect x="0.7" y="0.7" width="11.6" height="9.6" fill="none" stroke="#5f6368" stroke-width="1.4"/><path d="M6.5 0.7V10.3M0.7 5.5H12.3" stroke="#5f6368" stroke-width="1.3"/></svg>
<div class="a" style="left:1092px;top:308px;width:204px;height:1px;background:#dadce0;"></div>
<div class="a" style="left:1092px;top:325px;font-size:11px;line-height:11px;color:#3c4043;letter-spacing:-0.2px;">X 軸</div>
<div class="a" style="left:1092px;top:344px;width:204px;height:27px;background:#f1f3f4;border-radius:14px"></div>
<svg style="left:1104px;top:353px" width="12" height="9" viewBox="0 0 12 9"><path d="M0.3 1.3H8M4.15 1.3V8.8" fill="none" stroke="#5f6368" stroke-width="1.4"/><path d="M7 4.5H11.6M9.3 4.5V8.8" fill="none" stroke="#5f6368" stroke-width="1.6"/></svg>
<div class="a" style="left:1129px;top:352px;font-size:10.5px;line-height:10.5px;color:#3c4043;letter-spacing:0.0px;">A3:A15</div>
<svg style="left:1277px;top:350px" width="3" height="13" viewBox="0 0 3 13"><circle cx="1.5" cy="1.5" r="1.3" fill="#5f6368"/><circle cx="1.5" cy="6.5" r="1.3" fill="#5f6368"/><circle cx="1.5" cy="11.5" r="1.3" fill="#5f6368"/></svg>
<div class="a" style="left:1093px;top:385px;width:13px;height:13px;background:#fff;border:1.6px solid #5f6368;border-radius:2px"></div>
<div class="a" style="left:1116px;top:387px;font-size:11px;line-height:11px;color:#3c4043;letter-spacing:-1.0px;">集計</div>
<div class="a" style="left:1092px;top:424px;font-size:11px;line-height:11px;color:#3c4043;letter-spacing:-1.9px;">系列</div>
<div class="a" style="left:1092px;top:443px;width:204px;height:27px;background:#f1f3f4;border-radius:14px"></div>
<svg style="left:1102px;top:453px" width="16" height="8.5" viewBox="0 0 16 8.5"><path d="M1 1.6L3.2 0.8V7.8" fill="none" stroke="#5f6368" stroke-width="1.7"/><path d="M5.3 1.3H9V4L5.6 5.4V7.3H9.4" fill="none" stroke="#5f6368" stroke-width="1.5"/><path d="M10.6 1.3H14.3V7.3H10.6M11.6 4.2H14.3" fill="none" stroke="#5f6368" stroke-width="1.5"/></svg>
<div class="a" style="left:1129px;top:451px;font-size:10.5px;line-height:10.5px;color:#3c4043;">A店</div>
<svg style="left:1277px;top:450px" width="3" height="13" viewBox="0 0 3 13"><circle cx="1.5" cy="1.5" r="1.3" fill="#5f6368"/><circle cx="1.5" cy="6.5" r="1.3" fill="#5f6368"/><circle cx="1.5" cy="11.5" r="1.3" fill="#5f6368"/></svg>
<div class="a" style="left:1092px;top:476px;width:204px;height:27px;background:#f1f3f4;border-radius:14px"></div>
<svg style="left:1102px;top:486px" width="16" height="8.5" viewBox="0 0 16 8.5"><path d="M1 1.6L3.2 0.8V7.8" fill="none" stroke="#5f6368" stroke-width="1.7"/><path d="M5.3 1.3H9V4L5.6 5.4V7.3H9.4" fill="none" stroke="#5f6368" stroke-width="1.5"/><path d="M10.6 1.3H14.3V7.3H10.6M11.6 4.2H14.3" fill="none" stroke="#5f6368" stroke-width="1.5"/></svg>
<div class="a" style="left:1129px;top:484px;font-size:10.5px;line-height:10.5px;color:#3c4043;">B店</div>
<svg style="left:1277px;top:483px" width="3" height="13" viewBox="0 0 3 13"><circle cx="1.5" cy="1.5" r="1.3" fill="#5f6368"/><circle cx="1.5" cy="6.5" r="1.3" fill="#5f6368"/><circle cx="1.5" cy="11.5" r="1.3" fill="#5f6368"/></svg>
<div class="a" style="left:1092px;top:509px;width:204px;height:27px;background:#fff;border:1px solid #dadce0;border-radius:14px"></div>
<div class="a" style="left:1105px;top:518px;font-size:11px;line-height:11px;color:#80868b;letter-spacing:-0.35px;">系列を追加</div>
<div class="a" style="left:1085px;top:547px;width:30px;height:30px;border-radius:15px;background:#f6f8f7"></div>
<div class="a" style="left:1093px;top:555px;width:13px;height:13px;background:#fff;border:1.6px solid #5f6368;border-radius:2px"></div>
<div class="a" style="left:1116px;top:556px;font-size:11px;line-height:11px;color:#3c4043;letter-spacing:-0.45px;">行と列を切り替える</div>
<div class="a" style="left:1085px;top:569px;width:30px;height:30px;border-radius:15px;background:#eef5f0"></div>
<div class="a" style="left:1093px;top:577px;width:13px;height:13px;background:#188038;border-radius:2px"></div>
<svg style="left:1095px;top:580px" width="9" height="7" viewBox="0 0 9 7"><path d="M0.8 3.4L3.4 6L8.2 1" fill="none" stroke="#fff" stroke-width="1.6"/></svg>
<div class="a" style="left:1116px;top:578px;font-size:11px;line-height:11px;color:#3c4043;letter-spacing:-0.4px;">行 3 を見出しとして使用</div>
<div class="a" style="left:1080px;top:591px;width:237px;height:3px;background:#f1f3f4;"></div>
</body></html>
